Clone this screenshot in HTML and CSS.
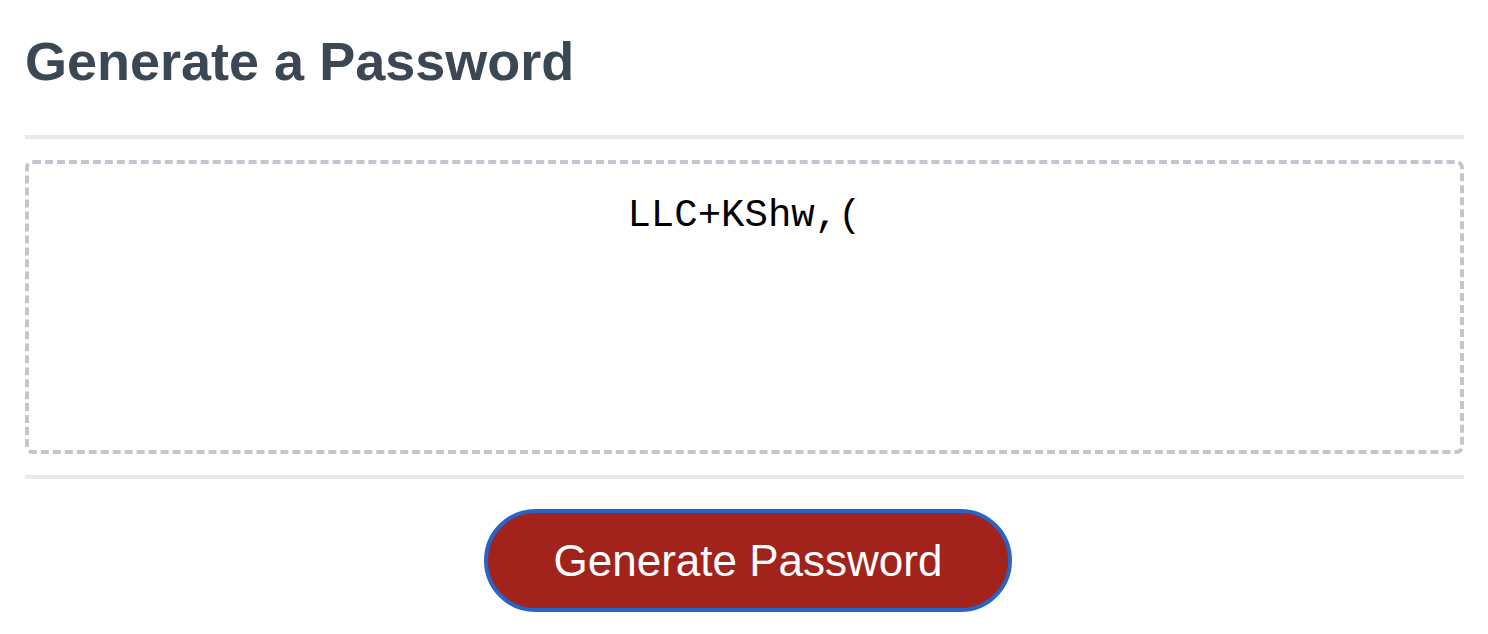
FILE: index.html
```html
<!DOCTYPE html>
<html lang="en">
<head>
<meta charset="utf-8">
<title>Password Generator</title>
<link rel="stylesheet" href="styles.css">
</head>
<body>
<div class="wrapper">
  <div class="card">
    <div class="card-header">
      <h2 class="title">Generate a Password</h2>
    </div>
    <div class="card-body">
      <textarea readonly class="password" aria-label="Generated Password">LLC+KShw,(</textarea>
    </div>
    <div class="card-footer">
      <button class="btn" type="button">Generate Password</button>
    </div>
  </div>
</div>
</body>
</html>
```

FILE: styles.css
```css
html, body {
  margin: 0;
  padding: 0;
  background: #ffffff;
  font-family: "Liberation Sans", Arial, Helvetica, sans-serif;
}

.wrapper {
  padding: 0 24px 0 25px;
}

.card {
  display: flex;
  flex-direction: column;
}

.card-header {
  padding-top: 30px;
  padding-bottom: 43px;
  border-bottom: 4px solid #e7e9eb;
}

.title {
  margin: 0;
  font-size: 54px;
  line-height: 62px;
  font-weight: 700;
  color: #3b4753;
}

.card-body {
  padding: 21px 0;
  border-bottom: 4px solid #e7e9eb;
}

.password {
  display: block;
  box-sizing: border-box;
  width: 100%;
  height: 294px;
  margin: 0;
  padding: 29px 10px 0;
  border: 4px dashed #c0c7cf;
  border-radius: 8px;
  resize: none;
  overflow: hidden;
  outline: none;
  text-align: center;
  font-family: "Liberation Mono", "Courier New", monospace;
  font-size: 39px;
  line-height: 46px;
  color: #000000;
  background: #ffffff;
}

.card-footer {
  display: flex;
  justify-content: center;
  padding: 30px 0 0 7px;
}

.btn {
  box-sizing: border-box;
  margin: 0;
  padding: 22px 66px;
  border: 4px solid #2a63c7;
  border-radius: 60px;
  background: #a2221c;
  color: #ffffff;
  font-family: "Liberation Sans", Arial, Helvetica, sans-serif;
  font-size: 44px;
  line-height: 51px;
  cursor: pointer;
}
```
